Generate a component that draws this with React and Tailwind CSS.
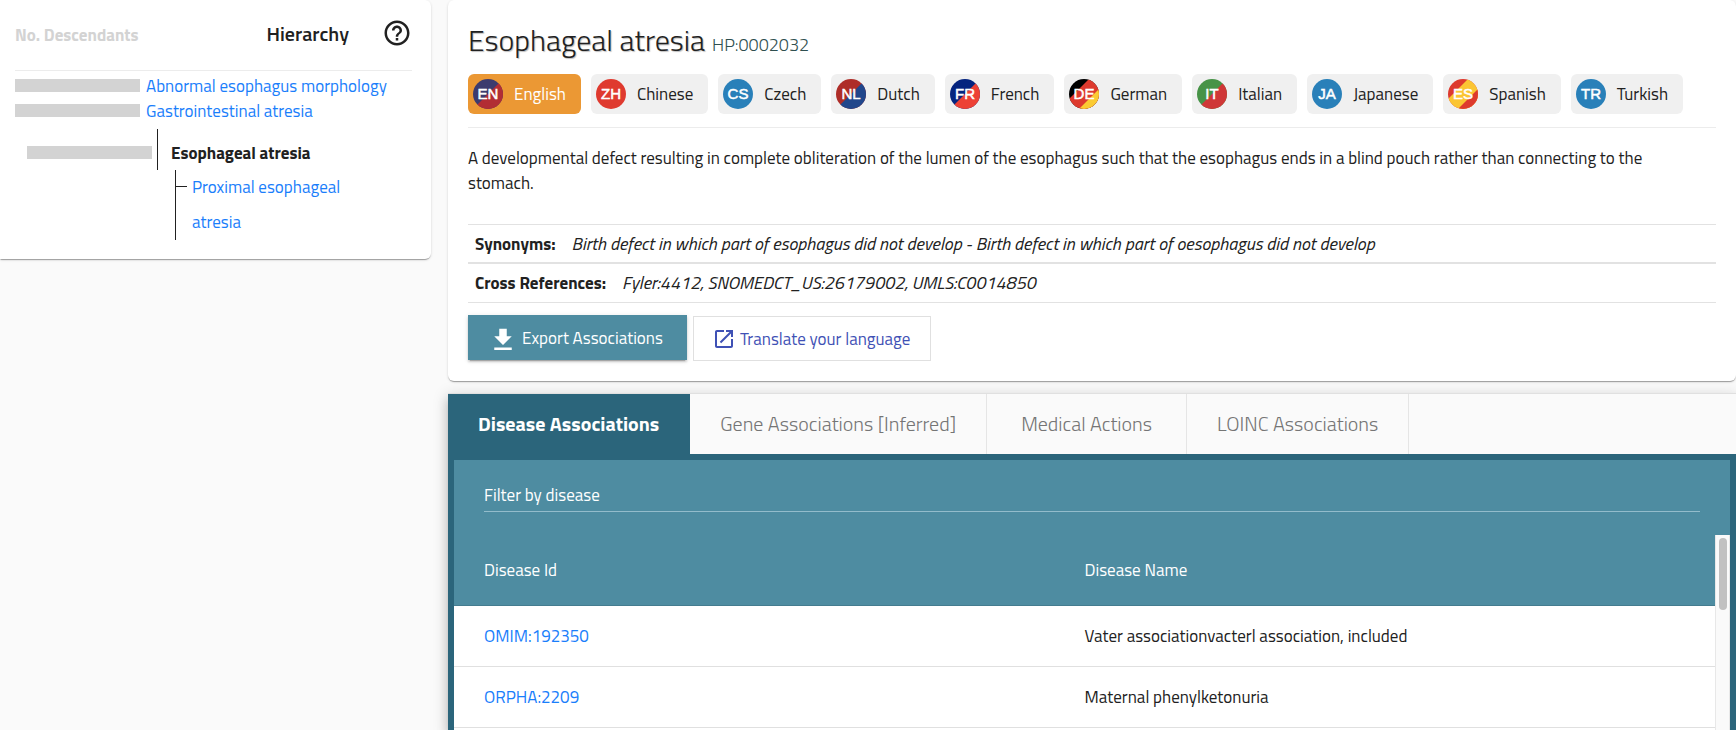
import React, { useState } from "react";

const LANGUAGES = [
  { code: "EN", name: "English", stripes: ["#3c3b6e", "#b22d34"] },
  { code: "ZH", name: "Chinese", stripes: ["#df3a2f"] },
  { code: "CS", name: "Czech", stripes: ["#2980b9"] },
  { code: "NL", name: "Dutch", stripes: ["#ae2d28", "#21468b"] },
  { code: "FR", name: "French", stripes: ["#05247f", "#ed4135"] },
  { code: "DE", name: "German", stripes: ["#000000", "#dd3a2e", "#fbcb33"] },
  { code: "IT", name: "Italian", stripes: ["#479347", "#cf3737"] },
  { code: "JA", name: "Japanese", stripes: ["#2980b9"] },
  { code: "ES", name: "Spanish", stripes: ["#dd3a2e", "#fbc533", "#dd3a2e"] },
  { code: "TR", name: "Turkish", stripes: ["#2980b9"] },
];

const TABS = [
  "Disease Associations",
  "Gene Associations [Inferred]",
  "Medical Actions",
  "LOINC Associations",
];

const DISEASES = [
  { id: "OMIM:192350", name: "Vater associationvacterl association, included" },
  { id: "ORPHA:2209", name: "Maternal phenylketonuria" },
];

const CARD_SHADOW =
  "shadow-[0_2px_1px_-1px_rgba(0,0,0,0.2),0_1px_1px_0_rgba(0,0,0,0.14),0_1px_3px_0_rgba(0,0,0,0.12)]";

function Flag({ code, stripes }) {
  const clip = `flag-${code}`;
  const [first, second, third] = stripes;
  return (
    <svg viewBox="0 0 30 30" className="size-[30px] shrink-0" aria-hidden="true">
      <clipPath id={clip}>
        <circle cx="15" cy="15" r="15" />
      </clipPath>
      <g clipPath={`url(#${clip})`}>
        <rect width="30" height="30" fill={first} />
        {second && !third && <path d="M30 0V30H0Z" fill={second} />}
        {third && <path d="M20 0H30V30H0V20Z" fill={second} />}
        {third && <path d="M30 10V30H10Z" fill={third} />}
      </g>
      <text
        x="15"
        y="20"
        textAnchor="middle"
        fill="#ffffff"
        stroke="#ffffff"
        strokeWidth="0.5"
        className="font-['Liberation_Sans',sans-serif] text-[15px]"
      >
        {code}
      </text>
    </svg>
  );
}

function Bar() {
  return <span className="h-[13px] w-[125px] shrink-0 bg-[#d3d3d3]" />;
}

function Hierarchy() {
  return (
    <aside className={`w-[431px] shrink-0 rounded-r-md bg-white pt-4 pr-[19px] pb-[19px] pl-[15px] ${CARD_SHADOW}`}>
      <header className="flex h-[55px] items-start border-b border-[#ececec]">
        <span className="mt-[7px] flex-1 leading-6 font-bold text-[#d3d3d3]">
          No. Descendants
        </span>
        <h2 className="mt-[6px] mr-[33px] text-[20px] leading-6 font-semibold">Hierarchy</h2>
        <button type="button" aria-label="Help" className="mt-[2px]">
          <svg viewBox="0 0 24 24" className="size-[30px]" fill="currentColor">
            <path d="M11 18h2v-2h-2v2zm1-16C6.480 2 2 6.480 2 12s4.480 10 10 10 10-4.480 10-10S17.520 2 12 2zm0 18c-4.410 0-8-3.590-8-8s3.590-8 8-8 8 3.590 8 8-3.590 8-8 8zm0-14c-2.210 0-4 1.790-4 4h2c0-1.100.9-2 2-2s2 .9 2 2c0 2-3 1.750-3 5h2c0-2.250 3-2.500 3-5 0-2.210-1.790-4-4-4z" />
          </svg>
        </button>
      </header>
      <ul className="pt-[2px]">
        {["Abnormal esophagus morphology", "Gastrointestinal atresia"].map((name) => (
          <li key={name} className="flex h-[25px] items-center gap-[6px]">
            <Bar />
            <a href="#" className="text-[#1a7efb]">{name}</a>
          </li>
        ))}
      </ul>
      <div className="mt-[6px] ml-3 flex h-[41px] items-end">
        <span className="mb-[11px] flex">
          <Bar />
        </span>
        <span className="ml-[5px] h-full w-px bg-[#212121]" />
        <strong className="mb-[5px] ml-[13px] font-bold">Esophageal atresia</strong>
      </div>
      <ul className="ml-[160px] flex border-l border-[#212121]">
        <li className="flex">
          <span className="mt-4 h-px w-[11px] shrink-0 bg-[#212121]" />
          <a href="#" className="ml-[5px] w-[170px] leading-[35px] text-[#1a7efb]">
            Proximal esophageal atresia
          </a>
        </li>
      </ul>
    </aside>
  );
}

function Term() {
  const [language, setLanguage] = useState("EN");
  return (
    <section className={`rounded-md bg-white px-5 pt-[22px] pb-5 ${CARD_SHADOW}`}>
      <h1 className="flex h-9 items-baseline gap-[7px] text-[30px] leading-9 font-light [text-shadow:1px_1px_1px_#bdbdbd]">
        Esophageal atresia
        <span className="text-[18px] text-[#2f4f4f] [text-shadow:none]">HP:0002032</span>
      </h1>
      <div className="mt-4 flex flex-wrap gap-[10px] border-b border-[#ececec] pb-[13px]">
        {LANGUAGES.map((l) => (
          <button
            key={l.code}
            type="button"
            onClick={() => setLanguage(l.code)}
            className={`flex h-10 items-center gap-[11px] rounded-md pr-[15px] pl-[5px] ${
              l.code === language ? "bg-[#eb9834] text-white" : "bg-[#f0f0f0]"
            }`}
          >
            <Flag code={l.code} stripes={l.stripes} />
            {l.name}
          </button>
        ))}
      </div>
      <p className="mt-[18px] pr-5 leading-[25px]">
        A developmental defect resulting in complete obliteration of the lumen of the esophagus such
        that the esophagus ends in a blind pouch rather than connecting to the stomach.
      </p>
      <dl className="mt-7">
        <div className="flex h-[39px] items-center border-y border-[#e2e2e2] px-[7px]">
          <dt className="mr-4 font-bold">Synonyms:</dt>
          <dd className="text-[18px] italic">
            Birth defect in which part of esophagus did not develop - Birth defect in which part of
            oesophagus did not develop
          </dd>
        </div>
        <div className="flex h-10 items-center border-y border-[#e2e2e2] px-[7px]">
          <dt className="mr-4 font-bold">Cross References:</dt>
          <dd className="text-[18px] italic">Fyler:4412, SNOMEDCT_US:26179002, UMLS:C0014850</dd>
        </div>
      </dl>
      <div className="mt-3 flex gap-[6px]">
        <button
          type="button"
          className="flex h-[45px] items-center gap-1 bg-[#4e8ca1] pr-6 pl-5 text-white shadow-[0_3px_1px_-2px_rgba(0,0,0,0.2),0_2px_2px_0_rgba(0,0,0,0.14),0_1px_5px_0_rgba(0,0,0,0.12)]"
        >
          <svg viewBox="0 0 24 24" className="mt-1 size-[30px]" fill="currentColor" aria-hidden="true">
            <path d="M19 9h-4V3H9v6H5l7 7 7-7zM5 18v2h14v-2H5z" />
          </svg>
          Export Associations
        </button>
        <a
          href="#"
          className="mt-px flex h-[45px] items-center gap-1 border border-[#e0e0e0] pr-5 pl-[18px] text-[#3f51b5]"
        >
          <svg viewBox="0 0 24 24" className="size-6" fill="currentColor" aria-hidden="true">
            <path d="M19 19H5V5h7V3H5c-1.110 0-2 .9-2 2v14c0 1.100.89 2 2 2h14c1.100 0 2-.9 2-2v-7h-2v7zM14 3v2h3.590l-9.830 9.830 1.410 1.410L19 6.410V10h2V3h-7z" />
          </svg>
          Translate your language
        </a>
      </div>
    </section>
  );
}

function Associations() {
  const [tab, setTab] = useState(TABS[0]);
  return (
    <section className="mt-3 flex min-h-0 flex-1 flex-col bg-[#fafafa] shadow-[0_5px_5px_-3px_rgba(0,0,0,0.2),0_8px_10px_1px_rgba(0,0,0,0.14),0_3px_14px_2px_rgba(0,0,0,0.12)]">
      <div role="tablist" className="flex border-t border-[#e0e0e0]">
        {TABS.map((name) => (
          <button
            key={name}
            type="button"
            role="tab"
            aria-selected={name === tab}
            onClick={() => setTab(name)}
            className={`h-[60px] min-w-[200px] border-r px-[30px] text-[20px] ${
              name === tab
                ? "border-[#2b657b] bg-[#2b657b] font-bold text-white"
                : "border-[#e5e5e5] font-light text-[#757575]"
            }`}
          >
            {name}
          </button>
        ))}
      </div>
      <div className="flex min-h-0 flex-1 flex-col border-x-6 border-t-6 border-[#2b657b] bg-white">
        <div className="bg-[#4e8ca1] px-[30px] pt-5 pb-[23px]">
          <input
            type="text"
            aria-label="Filter by disease"
            placeholder="Filter by disease"
            className="h-8 w-full border-b border-[#93bccb] bg-transparent pb-[2px] text-white outline-none placeholder:text-white placeholder:opacity-100"
          />
        </div>
        <div className="flex min-h-0 flex-1">
          <div className="min-w-0 flex-1 overflow-hidden">
            <table className="w-full table-fixed border-separate border-spacing-0 text-left">
              <thead>
                <tr className="bg-[#4e8ca1] text-white">
                  <th scope="col" className="h-[71px] border-b border-[#447c8f] pl-[30px] font-normal">
                    Disease Id
                  </th>
                  <th scope="col" className="border-b border-[#447c8f] font-normal">Disease Name</th>
                </tr>
              </thead>
              <tbody>
                {DISEASES.map((d) => (
                  <tr key={d.id}>
                    <td className="h-[61px] border-b border-[#e0e0e0] pl-[30px]">
                      <a href="#" className="text-[#1a7efb]">{d.id}</a>
                    </td>
                    <td className="border-b border-[#e0e0e0]">{d.name}</td>
                  </tr>
                ))}
              </tbody>
            </table>
          </div>
          <div className="w-[15px] shrink-0 border-x border-[#e8e8e8] bg-[#fafafa] pt-[3px] pl-[3px]">
            <div className="h-[72px] w-2 rounded-full bg-[#c1c1c1]" />
          </div>
        </div>
      </div>
    </section>
  );
}

export default function App() {
  return (
    <div className="flex h-screen items-start gap-[17px] overflow-hidden bg-[#fafafa] font-['Titillium_Web',Roboto,sans-serif] text-[17px] leading-6 text-[#212121]">
      <Hierarchy />
      <main className="flex h-full min-w-0 flex-1 flex-col">
        <Term />
        <Associations />
      </main>
    </div>
  );
}
